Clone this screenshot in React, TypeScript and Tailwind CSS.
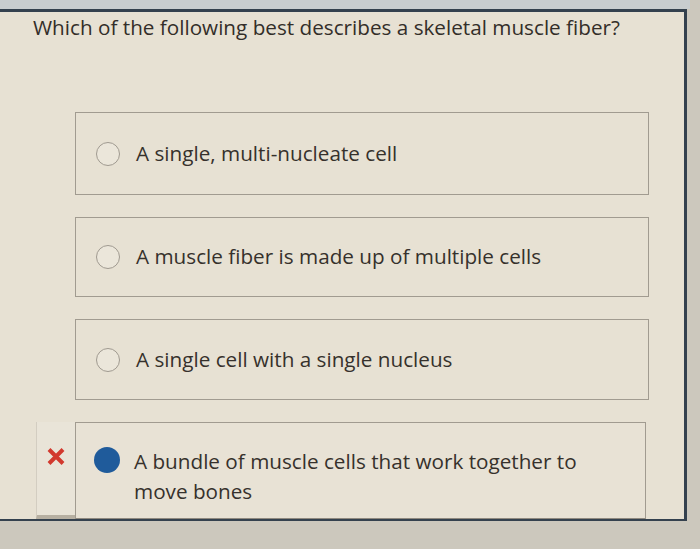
const options = [
  { text: "A single, multi-nucleate cell", h: "h-[83px]" },
  { text: "A muscle fiber is made up of multiple cells", h: "h-[80px]" },
  { text: "A single cell with a single nucleus", h: "h-[81px]" },
];

function Radio() {
  return <span className="w-[24px] h-[24px] shrink-0 rounded-full border-[1.5px] border-[#a09a90] bg-[#ebe6da]" />;
}

export default function App() {
  return (
    <div className="w-[700px] h-[549px] overflow-hidden bg-[#ccc8bd] flex flex-col" style={{ fontFamily: '"Open Sans", sans-serif' }}>
      <div className="h-[9px] bg-[#c8cdcf] w-[690px]" />
      <div className="w-[687px] h-[512px] border-t-[3px] border-r-[3px] border-b-[2px] border-[#34414e] bg-[#e7e1d3] pl-[33px] flex flex-col">
        <h1 className="mt-[1px] text-[20.7px] leading-[28px] text-[#332e29]">
          Which of the following best describes a skeletal muscle fiber?
        </h1>

        <div className="mt-[71px] flex flex-col gap-[22px]">
          {options.map((o) => (
            <div key={o.text} className="flex">
              <div className="w-[42px] shrink-0" />
              <div className={`w-[574px] ${o.h} border-[1.5px] border-[#a19b90] flex items-center pl-[20px] gap-[16px]`}>
                <Radio />
                <span className="text-[20.7px] text-[#36312c]">{o.text}</span>
              </div>
            </div>
          ))}
        </div>

        <div className="mt-[22px] flex flex-1">
          <div className="ml-[3px] w-[39px] shrink-0 border-l border-[#d3cdc1] border-b-[4px] border-b-[#b7b0a2] bg-[#e9e4d8] flex justify-center pt-[25px]">
            <svg width="20" height="19" viewBox="0 0 20 19">
              <path d="M3 2.5 17 16.5M17 2.5 3 16.5" stroke="#d2392e" strokeWidth="4" />
            </svg>
          </div>
          <div className="w-[571px] border-[1.5px] border-[#a19b90] border-b-[#8f897f] bg-[#e8e2d5] flex items-start pl-[18px] gap-[14px] pt-[23px]">
            <span className="w-[26px] h-[26px] shrink-0 rounded-full bg-[#1f5b9b] mt-[1px]" />
            <span className="text-[20.7px] leading-[30px] text-[#36312c] w-[470px]">
              A bundle of muscle cells that work together to move bones
            </span>
          </div>
        </div>
      </div>
    </div>
  );
}
